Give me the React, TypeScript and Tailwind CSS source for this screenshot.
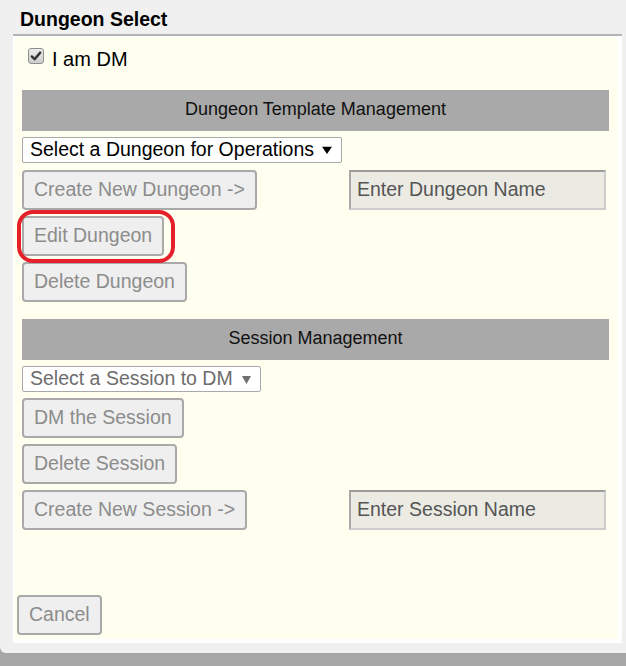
import React from 'react';

const font = { fontFamily: '"Liberation Sans", Arial, sans-serif' };

const Btn = ({ children }: { children: React.ReactNode }) => (
  <div className="h-[40px] inline-flex items-center self-start px-[10px] border-2 border-[#a9a9a9] rounded-[4px] bg-[#efefef] text-[19.5px] text-[#8c8c8c] leading-none whitespace-nowrap">
    {children}
  </div>
);

const NameInput = ({ placeholder }: { placeholder: string }) => (
  <div className="ml-auto mr-[3px] w-[257px] h-[40px] flex items-center pl-[6px] bg-[#ebebe4] border-2 border-t-[#9c9c9c] border-l-[#a8a8a8] border-b-[#cdcdcd] border-r-[#cdcdcd] text-[19.5px] text-[#555] leading-none whitespace-nowrap">
    {placeholder}
  </div>
);

const Bar = ({ title }: { title: string }) => (
  <div className="h-[41px] bg-[#a9a9a9] text-center pt-[6px] text-[18px] text-[#111]">{title}</div>
);

const Arrow = ({ color, w, h }: { color: string; w: number; h: number }) => (
  <svg width={w} height={h} viewBox="0 0 10 10" preserveAspectRatio="none">
    <path d="M0 1 L10 1 L5 10 Z" fill={color} />
  </svg>
);

export default function App() {
  return (
    <div className="w-[626px] h-[666px] bg-gradient-to-b from-[#c4c4c4] to-[#a6a6a6] overflow-hidden" style={font}>
      <div className="h-[653px] bg-[#f0f0f0] rounded-bl-[6px] flex flex-col">
        {/* header */}
        <div className="h-[34px] pl-[20px] pt-[5px] text-[19.5px] font-bold text-black">Dungeon Select</div>

        {/* modal body */}
        <div className="ml-[13px] w-[609px] h-[609px] border-t-2 border-[#b3b3b3] bg-white pl-[2px] pr-[5px] pt-[1px] pb-[4px]">
          <div className="h-full bg-[#fffff0] flex flex-col pl-[7px] pr-[8px]">
            <div className="flex items-start pt-[11px] pl-[6px] gap-[8px] text-[20px] text-black">
              <span className="w-[16px] h-[16px] rounded-[3px] border border-[#8e8e8e] bg-gradient-to-b from-[#ececec] to-[#cdcdcd] flex items-center justify-center">
                <svg width="12" height="12" viewBox="0 0 12 12">
                  <path d="M1.8 6.4 L4.6 9.2 L10.2 2.6" fill="none" stroke="#333" strokeWidth="2.4" strokeLinecap="round" strokeLinejoin="round" />
                </svg>
              </span>
              <span className="leading-[23px]">I am DM</span>
            </div>

            <div className="mt-[19px]">
              <Bar title="Dungeon Template Management" />
            </div>

            <div className="mt-[6px] w-[320px] h-[26px] flex items-center justify-between pl-[7px] pr-[9px] bg-white border border-[#a9a9a9] rounded-[2px] text-[19.5px] text-black leading-none whitespace-nowrap">
              <span>Select a Dungeon for Operations</span>
              <Arrow color="#000" w={10} h={8} />
            </div>

            <div className="mt-[7px] flex items-start">
              <Btn>Create New Dungeon -&gt;</Btn>
              <NameInput placeholder="Enter Dungeon Name" />
            </div>

            <div className="mt-[6px] relative self-start">
              <Btn>Edit Dungeon</Btn>
              {/* red annotation ring */}
              <div className="absolute -left-[5px] -top-[6px] w-[158px] h-[53px] border-4 border-[#e5202a] rounded-[16px]" />
            </div>

            <div className="mt-[6px] flex">
              <Btn>Delete Dungeon</Btn>
            </div>

            <div className="mt-[17px]">
              <Bar title="Session Management" />
            </div>

            <div className="mt-[6px] w-[239px] h-[26px] flex items-center justify-between pl-[7px] pr-[9px] bg-white border border-[#a9a9a9] rounded-[2px] text-[19.5px] text-[#6d6d6d] leading-none whitespace-nowrap">
              <span>Select a Session to DM</span>
              <Arrow color="#707070" w={9} h={9} />
            </div>

            <div className="mt-[6px] flex">
              <Btn>DM the Session</Btn>
            </div>
            <div className="mt-[6px] flex">
              <Btn>Delete Session</Btn>
            </div>
            <div className="mt-[6px] flex items-start">
              <Btn>Create New Session -&gt;</Btn>
              <NameInput placeholder="Enter Session Name" />
            </div>

            <div className="mt-auto -ml-[5px] pb-[4px] flex">
              <Btn>Cancel</Btn>
            </div>
          </div>
        </div>
      </div>
    </div>
  );
}
